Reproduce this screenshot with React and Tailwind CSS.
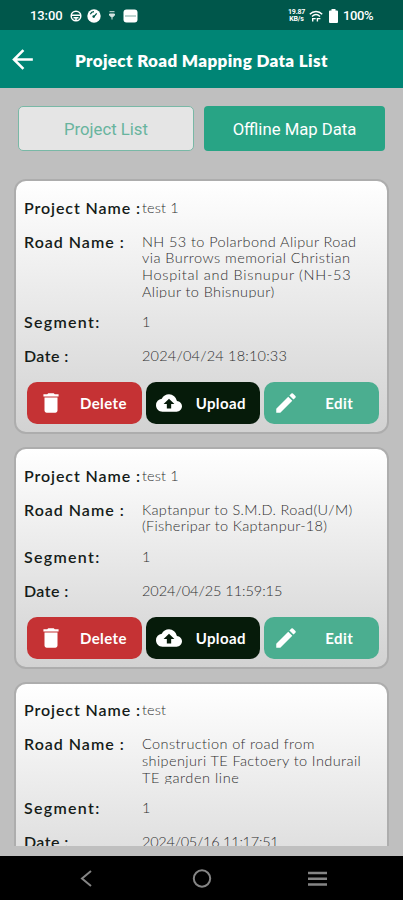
import { MdArrowBack, MdCloudUpload, MdDelete, MdEdit } from 'react-icons/md';

const projects = [
  {
    name: 'test 1',
    road: [
      { text: 'NH 53 to Polarbond Alipur Road', spacing: 'tracking-[0.4px]' },
      { text: 'via Burrows memorial Christian', spacing: 'tracking-[0.47px]' },
      { text: 'Hospital and Bisnupur (NH-53', spacing: 'tracking-[0.72px]' },
      { text: 'Alipur to Bhisnupur)', spacing: 'tracking-[0.41px]' },
    ],
    segment: '1',
    date: '2024/04/24 18:10:33',
    dateSpacing: 'tracking-[0.2px]',
  },
  {
    name: 'test 1',
    road: [
      { text: 'Kaptanpur to S.M.D. Road(U/M)', spacing: 'tracking-[0.36px]' },
      { text: '(Fisheripar to Kaptanpur-18)', spacing: 'tracking-[0.32px]' },
    ],
    segment: '1',
    date: '2024/04/25 11:59:15',
    dateSpacing: 'tracking-[-0.05px]',
  },
  {
    name: 'test',
    road: [
      { text: 'Construction of road from', spacing: 'tracking-[0.4px]' },
      { text: 'shipenjuri TE Factoery to Indurail', spacing: 'tracking-[0.41px]' },
      { text: 'TE garden line', spacing: 'tracking-[0.57px]' },
    ],
    segment: '1',
    date: '2024/05/16 11:17:51',
    dateSpacing: 'tracking-[-0.25px]',
  },
];

function StatusBar() {
  return (
    <div className="h-[30px] shrink-0 bg-[#00574b] text-white flex items-center justify-between pt-px pl-[30px] pr-[29px] font-[Roboto] text-[13px] font-medium">
      <div className="flex items-center">
        <span className="w-[33px] tracking-[-0.1px]">13:00</span>
        <svg className="w-3 h-3 ml-[7px]" viewBox="0 0 12 12" fill="none" stroke="white" strokeWidth="1.5">
          <circle cx="6" cy="6" r="4.8" />
          <path d="M1.5 5.2h9M3.5 7.8h5M6 8v2.5" />
        </svg>
        <svg className="w-[14px] h-[14px] ml-[5px]" viewBox="0 0 14 14">
          <circle cx="7" cy="7" r="6.7" fill="white" />
          <path d="M3.3 5.3A4.3 4.3 0 0 1 7 2.7M7 7.6l2.7-3.2" stroke="#00574b" strokeWidth="1.3" fill="none" />
          <circle cx="6.7" cy="7.6" r="1.3" fill="#00574b" />
        </svg>
        <svg className="w-[6px] h-[9px] ml-[8px]" viewBox="0 0 6 9">
          <path d="M0.5 0.7h5M0.5 3h5v1.3L3.8 5.7H2.2L0.5 4.3zM3 5v3.5" stroke="#d5e5e2" strokeWidth="1" fill="#d5e5e2" />
        </svg>
        <svg className="w-[15px] h-[14px] ml-[8px]" viewBox="0 0 15 14">
          <rect x="0.5" y="0.5" width="14" height="13" rx="3" fill="white" />
          <path d="M2 7h11" stroke="#7ba8a1" strokeWidth="1" />
        </svg>
      </div>
      <div className="flex items-center">
        <div className="w-[17px] text-[7px] leading-[7px] font-bold text-center tracking-[-0.2px]">
          <div>19.87</div>
          <div>KB/s</div>
        </div>
        <svg className="w-[14px] h-[12px] ml-[4px]" viewBox="0 0 14 12" fill="none" stroke="white" strokeWidth="1.4">
          <path d="M0.8 4.3C4.2 0.6 9.8 0.6 13.2 4.3M3 6.4c2.4-2.4 5.6-2.4 8 0" />
          <path d="M3.7 11.5V8.6h3M8.4 11.5V8.6h3" />
        </svg>
        <svg className="w-[9px] h-[14px] ml-[6px]" viewBox="0 0 9 14">
          <path d="M2.5 0h4v1.5H8a1 1 0 0 1 1 1V13a1 1 0 0 1-1 1H1a1 1 0 0 1-1-1V2.5a1 1 0 0 1 1-1h1.5z" fill="white" />
        </svg>
        <span className="w-[31px] ml-[5px] tracking-[-0.4px]">100%</span>
      </div>
    </div>
  );
}

function Label({ children, spacing }) {
  return <div className={`w-[118px] shrink-0 text-[16px] font-semibold text-[#151c19] whitespace-nowrap ${spacing}`}>{children}</div>;
}

function ActionButton({ icon, label, className, labelClass }) {
  return (
    <button className={`h-[42px] rounded-[10px] text-white flex items-center ${className}`}>
      {icon}
      <span className={`pt-px text-[15px] font-bold ${labelClass}`}>{label}</span>
    </button>
  );
}

function ProjectCard({ project }) {
  return (
    <div className="shrink-0 mx-[14px] pt-[9px] pb-[8px] px-2 rounded-[12px] border-2 border-[#adadad] bg-linear-to-b from-white to-[#d2d2d2] text-[14.5px] font-light text-[#303030]">
      <div className="h-[34px] pt-px flex items-center">
        <Label spacing="tracking-[0.9px]">Project Name :</Label>
        <span className="tracking-[0.15px]">{project.name}</span>
      </div>
      <div className="flex pt-[9.7px] mb-[7px] leading-[16.7px]">
        <Label spacing="tracking-[1px]">Road Name :</Label>
        <div className="overflow-hidden">
          <div className="-mb-[2.5px] whitespace-nowrap">
            {project.road.map((line) => (
              <div key={line.text} className={line.spacing}>{line.text}</div>
            ))}
          </div>
        </div>
      </div>
      <div className="h-[34px] flex items-center">
        <Label spacing="tracking-[1.3px]">Segment:</Label>
        <span>{project.segment}</span>
      </div>
      <div className="h-[34px] flex items-center">
        <Label spacing="tracking-[0.4px]">Date :</Label>
        <span className={project.dateSpacing}>{project.date}</span>
      </div>
      <div className="mt-[9px] ml-[3px] grid grid-cols-3 gap-1">
        <ActionButton icon={<MdDelete size={26} />} label="Delete" className="bg-[#c53234] pl-[11px]" labelClass="ml-4 tracking-[0.4px]" />
        <ActionButton icon={<MdCloudUpload size={26} />} label="Upload" className="bg-[#061b0a] pl-[10px]" labelClass="ml-[14px] tracking-[0.4px]" />
        <ActionButton icon={<MdEdit size={26} />} label="Edit" className="bg-[#4bae90] pl-[9px]" labelClass="ml-[26px] tracking-[0.4px]" />
      </div>
    </div>
  );
}

export default function App() {
  return (
    <div className="w-[403px] h-[900px] flex flex-col bg-[#bfbfbf] overflow-hidden font-[Lato,sans-serif]">
      <StatusBar />
      <header className="h-[58px] shrink-0 bg-[#008575] text-white flex items-center pl-[7px]">
        <MdArrowBack size={31} />
        <h1 className="ml-[37px] pt-[3px] text-[17px] font-extrabold tracking-[0.35px] whitespace-nowrap">Project Road Mapping Data List</h1>
      </header>

      <div className="shrink-0 flex gap-[10px] pt-[18px] pl-[18px] pr-[18px] pb-[28px] font-[Roboto] text-[16.7px]">
        <button className="w-[176px] h-[45px] pt-[2px] rounded-[5px] border border-[#79b8a6] bg-[#e5e5e5] text-[#68b49e]">Project List</button>
        <button className="w-[181px] h-[45px] pt-[2px] rounded-[4px] bg-[#28a485] text-white">Offline Map Data</button>
      </div>

      <main className="h-[667px] shrink-0 flex flex-col gap-[13px] overflow-hidden">
        {projects.map((project, index) => (
          <ProjectCard key={index} project={project} />
        ))}
      </main>

      <nav className="mt-auto h-[44px] shrink-0 bg-black flex items-center justify-between px-[76px] text-[#858585]">
        <svg className="w-5 h-5" viewBox="0 0 20 20" fill="none" stroke="currentColor" strokeWidth="2">
          <path d="M15 3L6 10.5L15 18" />
        </svg>
        <svg className="w-5 h-5" viewBox="0 0 20 20" fill="none" stroke="currentColor" strokeWidth="2">
          <circle cx="10" cy="10.5" r="8.2" />
        </svg>
        <svg className="w-5 h-5" viewBox="0 0 20 20" fill="none" stroke="currentColor" strokeWidth="2.4">
          <path d="M1 5h19M1 10.8h19M1 16.5h19" />
        </svg>
      </nav>
    </div>
  );
}
